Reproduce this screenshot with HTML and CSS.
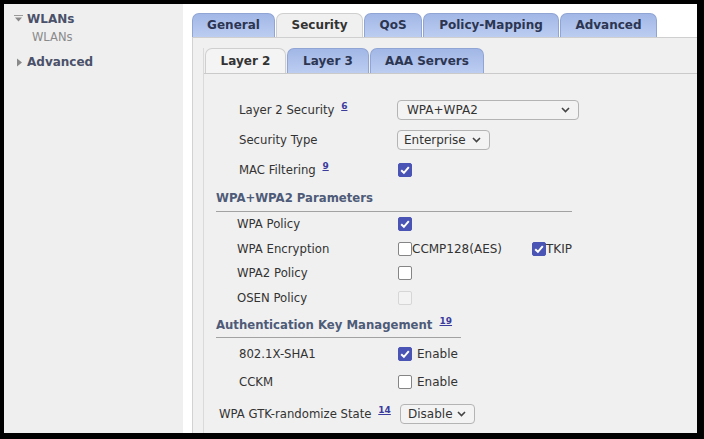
FILE: index.html
```html
<!DOCTYPE html>
<html lang="en">
<head>
  <meta charset="UTF-8">
  <title>WLAN Security</title>
  <link rel="stylesheet" href="styles.css">
</head>
<body>

<div class="screen">
  <!-- menu de gauche -->
  <aside class="sidebar">
    <div class="nav-item">
      <svg class="caret" width="9" height="8" viewBox="0 0 9 8"><rect x="0" y="0" width="9" height="1" fill="#9a9a9a"/><path d="M1 2.5 H8 L4.5 6.5 Z" fill="#8a8a8a"/></svg>
      WLANs
    </div>
    <div class="nav-sub">WLANs</div>
    <div class="nav-item closed">
      <svg class="caret" width="6" height="9" viewBox="0 0 6 9"><path d="M0.5 0.5 L5.5 4.5 L0.5 8.5 Z" fill="#8a8a8a"/></svg>
      Advanced
    </div>
  </aside>

  <main class="main">
    <nav class="tabs">
      <a class="tab t-general">General</a>
      <a class="tab t-security active">Security</a>
      <a class="tab t-qos">QoS</a>
      <a class="tab t-policy">Policy-Mapping</a>
      <a class="tab t-advanced">Advanced</a>
    </nav>

    <section class="panel">
      <div class="subpanel">
        <nav class="subtabs">
          <a class="subtab s-l2 active">Layer 2</a>
          <a class="subtab s-l3">Layer 3</a>
          <a class="subtab s-aaa">AAA Servers</a>
        </nav>

        <div class="form">
          <div class="row top">
            <span class="label">Layer 2 Security <a class="ref">6</a></span>
            <div class="select wide">WPA+WPA2
              <svg class="chev" width="9" height="6" viewBox="0 0 9 6"><path d="M1 1 L4.5 4.5 L8 1" fill="none" stroke="#444" stroke-width="1.6"/></svg>
            </div>
          </div>
          <div class="row top">
            <span class="label">Security Type</span>
            <div class="select mid">Enterprise
              <svg class="chev" width="9" height="6" viewBox="0 0 9 6"><path d="M1 1 L4.5 4.5 L8 1" fill="none" stroke="#444" stroke-width="1.6"/></svg>
            </div>
          </div>
          <div class="row top">
            <span class="label">MAC Filtering <a class="ref">9</a></span>
            <span class="cb on"><svg width="14" height="14" viewBox="0 0 14 14"><path d="M3.2 7.2 L5.9 9.8 L10.8 4.2" fill="none" stroke="#fff" stroke-width="2"/></svg></span>
          </div>

          <h3 class="section wpa">WPA+WPA2 Parameters</h3>

          <div class="row wpa-row">
            <span class="label">WPA Policy</span>
            <span class="cb on"><svg width="14" height="14" viewBox="0 0 14 14"><path d="M3.2 7.2 L5.9 9.8 L10.8 4.2" fill="none" stroke="#fff" stroke-width="2"/></svg></span>
          </div>
          <div class="row wpa-row">
            <span class="label">WPA Encryption</span>
            <span class="opt"><span class="cb"></span><span class="opt-text">CCMP128(AES)</span></span>
            <span class="opt tkip"><span class="cb on"><svg width="14" height="14" viewBox="0 0 14 14"><path d="M3.2 7.2 L5.9 9.8 L10.8 4.2" fill="none" stroke="#fff" stroke-width="2"/></svg></span><span class="opt-text">TKIP</span></span>
          </div>
          <div class="row wpa-row">
            <span class="label">WPA2 Policy</span>
            <span class="cb"></span>
          </div>
          <div class="row wpa-row">
            <span class="label">OSEN Policy</span>
            <span class="cb off"></span>
          </div>

          <h3 class="section akm">Authentication Key Management <a class="ref">19</a></h3>

          <div class="row akm-row">
            <span class="label">802.1X-SHA1</span>
            <span class="opt"><span class="cb on"><svg width="14" height="14" viewBox="0 0 14 14"><path d="M3.2 7.2 L5.9 9.8 L10.8 4.2" fill="none" stroke="#fff" stroke-width="2"/></svg></span><span class="opt-text spaced">Enable</span></span>
          </div>
          <div class="row akm-row">
            <span class="label">CCKM</span>
            <span class="opt"><span class="cb"></span><span class="opt-text spaced">Enable</span></span>
          </div>

          <div class="row gtk">
            <span class="label">WPA GTK-randomize State <a class="ref">14</a></span>
            <div class="select small">Disable
              <svg class="chev" width="9" height="6" viewBox="0 0 9 6"><path d="M1 1 L4.5 4.5 L8 1" fill="none" stroke="#444" stroke-width="1.6"/></svg>
            </div>
          </div>
        </div>
      </div>
    </section>
  </main>
</div>

</body>
</html>
```

FILE: styles.css
```css
body {
  margin: 0;
  background-color: #000;
  font-family: "DejaVu Sans", Verdana, sans-serif;
  color: #333;
}

.screen {
  display: flex;
  height: 429px;
  margin: 4px 7px 6px 4px;
  background-color: #fff;
}

/* menu de gauche */
.sidebar {
  width: 179px;
  background-color: #efefef;
  padding-top: 7px;
}

.nav-item {
  display: flex;
  align-items: center;
  height: 16px;
  padding-left: 6px;
  font-size: 12px;
  font-weight: bold;
  color: #4a5169;
}

.nav-item .caret {
  width: 17px;
  flex: none;
}

.nav-item.closed {
  margin-top: 7px;
  padding-left: 8px;
}

.nav-item.closed .caret {
  width: 15px;
}

.nav-sub {
  padding-left: 28px;
  height: 20px;
  line-height: 20px;
  font-size: 11.5px;
  color: #8a8a8a;
}

/* zone principale */
.main {
  flex: 1;
  display: flex;
  flex-direction: column;
  padding: 9px 0 0 9px;
}

.tabs {
  display: flex;
  gap: 1px;
  height: 24px;
}

.tab,
.subtab {
  box-sizing: border-box;
  text-align: center;
  font-size: 12px;
  font-weight: bold;
  color: #2c3652;
  background: linear-gradient(#a2b7e6, #bccdf1);
  border: 1px solid #90a5d4;
  border-bottom: none;
  border-radius: 7px 7px 0 0;
}

.tab {
  line-height: 23px;
}

.t-general { width: 83px; }
.t-security { width: 87px; }
.t-qos { width: 58px; }
.t-policy { width: 136px; }
.t-advanced { width: 97px; }

.tab.active {
  background: #f0f0f0;
  border-color: #cfcfcf;
  color: #333;
}

.panel {
  flex: 1;
  background-color: #f0f0f0;
  border-top: 1px solid #cfcfcf;
  border-left: 1px solid #d2d2d2;
  padding: 10px 0 0 10px;
}

.subpanel {
  height: 100%;
  border-left: 1px solid #dadada;
}

.subtabs {
  display: flex;
  gap: 1px;
  height: 25px;
  padding-left: 1px;
  border-bottom: 1px solid #cacaca;
}

.subtab {
  line-height: 25px;
}

.s-l2 { width: 81px; }
.s-l3 { width: 82px; }
.s-aaa { width: 114px; }

.subtab.active {
  background: #f4f4f4;
  border-color: #cfcfcf;
  color: #333;
}

/* formulaire */
.form {
  padding: 21px 0 0 12px;
  font-size: 11.7px;
}

.row {
  display: flex;
  align-items: center;
}

.row .label {
  flex: none;
}

.row.top {
  height: 30px;
  padding-left: 23px;
}

.row.top .label {
  width: 158px;
}

.row.wpa-row {
  height: 24.6px;
  padding-left: 21px;
}

.row.wpa-row .label {
  width: 160px;
}

.row.akm-row {
  height: 28px;
  padding-left: 23px;
}

.row.akm-row .label {
  width: 158px;
}

.row.gtk {
  height: 34px;
  padding-top: 1px;
  padding-left: 3px;
}

.row.gtk .label {
  width: 181px;
}

.ref {
  position: relative;
  top: -5px;
  margin-left: 3px;
  font-size: 9px;
  font-weight: bold;
  color: #3b3b9e;
  text-decoration: underline;
}

.section {
  margin: 0;
  font-size: 11.7px;
  font-weight: bold;
  color: #4e5b78;
  border-bottom: 1px solid #a2a2a2;
}

.section.wpa {
  width: 356px;
  margin-top: 1px;
  padding: 5px 0 6px;
}

.section.akm {
  width: 245px;
  margin-bottom: 2px;
  padding: 8px 0 5px;
}

.select {
  display: flex;
  align-items: center;
  justify-content: space-between;
  box-sizing: border-box;
  height: 20px;
  padding: 0 8px 0 9px;
  font-size: 12px;
  color: #333;
  background-color: #f3f3f3;
  border: 1px solid #b4b4b4;
  border-radius: 4px;
}

.select.wide {
  width: 182px;
}

.select.mid {
  width: 93px;
  padding-left: 6px;
}

.select.small {
  width: 75px;
  padding-left: 7px;
}

.cb {
  display: inline-block;
  box-sizing: border-box;
  width: 14px;
  height: 14px;
  margin-left: 1px;
  background-color: #fff;
  border: 1px solid #858585;
  border-radius: 2px;
}

.cb svg {
  display: block;
  margin: -1px;
}

.cb.on {
  background-color: #4a54b4;
  border-color: #4a54b4;
}

.cb.off {
  background-color: #f3f3f3;
  border-color: #d6d6d6;
}

.opt {
  display: flex;
  align-items: center;
}

.opt.tkip {
  margin-left: 29px;
}

.opt-text {
  font-size: 12px;
}

.opt-text.spaced {
  margin-left: 5px;
}
```
